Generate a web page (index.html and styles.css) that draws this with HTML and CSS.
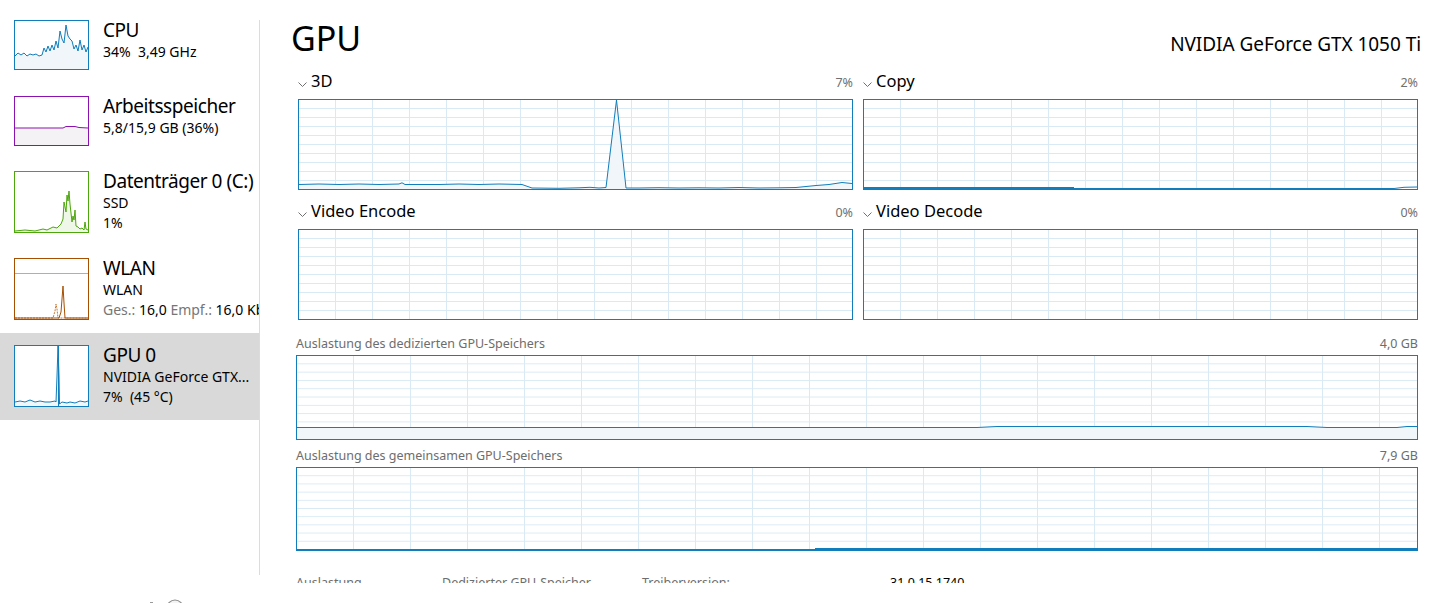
FILE: index.html
```html
<!DOCTYPE html>
<html lang="de">
<head>
<meta charset="utf-8">
<title>Task-Manager – GPU</title>
<link rel="stylesheet" href="styles.css">
</head>
<body>
<div class="app">
  <div class="body">
    <nav class="sidebar">
      <div class="item item-first">
        <div class="thumb thumb-cpu thumb-2">
          <svg viewBox="0 0 73 48" preserveAspectRatio="none">
            <polygon class="fill-cpu" points="0,35 3,32 6,34 9,32 12,35 15,33 18,34 21,33 24,35 27,34 29,27 31,31 33,25 35,30 37,24 39,29 41,20 43,27 45,10 47,18 49,22 51,4 53,15 55,18 57,20 59,28 61,24 63,30 65,19 67,29 69,24 71,31 73,26 73,48 0,48"/>
            <polyline class="line-cpu" points="0,35 3,32 6,34 9,32 12,35 15,33 18,34 21,33 24,35 27,34 29,27 31,31 33,25 35,30 37,24 39,29 41,20 43,27 45,10 47,18 49,22 51,4 53,15 55,18 57,20 59,28 61,24 63,30 65,19 67,29 69,24 71,31 73,26"/>
          </svg>
        </div>
        <div class="info">
          <div class="title">CPU</div>
          <div class="sub">34%&nbsp; 3,49 GHz</div>
        </div>
      </div>
      <div class="item">
        <div class="thumb thumb-mem thumb-2">
          <svg viewBox="0 0 73 48" preserveAspectRatio="none">
            <polygon class="fill-mem" points="0,31 48,31 51,29.5 60,29.5 64,30.5 73,31 73,48 0,48"/>
            <polyline class="line-mem" points="0,31 48,31 51,29.5 60,29.5 64,30.5 73,31"/>
          </svg>
        </div>
        <div class="info">
          <div class="title">Arbeitsspeicher</div>
          <div class="sub">5,8/15,9 GB (36%)</div>
        </div>
      </div>
      <div class="item">
        <div class="thumb thumb-disk thumb-3">
          <svg viewBox="0 0 73 60" preserveAspectRatio="none">
            <polygon class="fill-disk" points="0,59 10,58 20,59 28,57 32,58 38,55 42,56 46,52 48,47 49,30 51,40 52,23 53,29 54,19 55,32 57,50 58,44 59,48 60,38 61,54 63,55 65,57 67,56 69,58 70,50 71,57 73,58 73,60 0,60"/>
            <polyline class="line-disk" points="0,59 10,58 20,59 28,57 32,58 38,55 42,56 46,52 48,47 49,30 51,40 52,23 53,29 54,19 55,32 57,50 58,44 59,48 60,38 61,54 63,55 65,57 67,56 69,58 70,50 71,57 73,58"/>
          </svg>
        </div>
        <div class="info">
          <div class="title">Datenträger 0 (C:)</div>
          <div class="sub">SSD</div>
          <div class="sub">1%</div>
        </div>
      </div>
      <div class="item">
        <div class="thumb thumb-net thumb-3">
          <svg viewBox="0 0 73 60" preserveAspectRatio="none">
            <line class="scale-net" x1="0" y1="14.5" x2="73" y2="14.5"/>
            <polyline class="line-net-dash" points="0,59 38,59 40,52 41,45 42,50 43,59 73,59"/>
            <polyline class="line-net" points="0,59 44,59 46,53 47,40 48,27 49,44 50,59 73,59"/>
          </svg>
        </div>
        <div class="info">
          <div class="title">WLAN</div>
          <div class="sub">WLAN</div>
          <div class="sub"><span class="muted">Ges.:</span> 16,0 <span class="muted">Empf.:</span> 16,0 Kbit/s</div>
        </div>
      </div>
      <div class="item item-selected">
        <div class="thumb thumb-gpu thumb-3">
          <svg viewBox="0 0 73 60" preserveAspectRatio="none">
            <polygon class="fill-gpu" points="0,56 5,55 10,56 15,54 20,56 25,55 30,56 35,56 40,55 41,56 42,30 43,0 44,30 44.5,58 47,56 52,57 55,56 60,57 65,55 70,56 73,55 73,60 0,60"/>
            <polyline class="line-gpu" points="0,56 5,55 10,56 15,54 20,56 25,55 30,56 35,56 40,55 41,56 42,30 43,0 44,30 44.5,58 47,56 52,57 55,56 60,57 65,55 70,56 73,55"/>
            <line class="line-gpu" x1="43.5" y1="0" x2="43.5" y2="60"/>
          </svg>
        </div>
        <div class="info">
          <div class="title">GPU 0</div>
          <div class="sub">NVIDIA GeForce GTX...</div>
          <div class="sub">7%&nbsp; (45 °C)</div>
        </div>
      </div>
    </nav>
    <div class="divider"></div>
    <main class="main">
      <header class="head">
        <h1 class="head-title">GPU</h1>
        <div class="head-model">NVIDIA GeForce GTX 1050 Ti</div>
      </header>

      <section class="engines">
        <div class="engine">
          <div class="engine-head">
            <svg class="chev" viewBox="0 0 9 5"><polyline points="0.5,0.5 4.5,4.5 8.5,0.5"/></svg>
            <span class="engine-name">3D</span>
            <span class="pct">7%</span>
          </div>
          <div class="graph grid-s">
            <svg viewBox="0 0 553 89" preserveAspectRatio="none">
              <polygon class="g-fill" points="0,84.5 20,84 40,84.5 60,84 80,84.5 100,84 103,82.8 106,84.5 140,84.5 160,84 180,84.5 200,84 223,84.5 233,88 260,88.3 280,87.8 291,87.3 300,88 307,87.5 317.5,0 327,88 340,88 360,87.7 380,88 400,87.8 420,88 440,87.5 460,88 480,87.8 497,87.5 517,85.5 530,84.5 543,82.5 553,83.5 553,89 0,89"/>
              <polyline class="g-line" points="0,84.5 20,84 40,84.5 60,84 80,84.5 100,84 103,82.8 106,84.5 140,84.5 160,84 180,84.5 200,84 223,84.5 233,88 260,88.3 280,87.8 291,87.3 300,88 307,87.5 317.5,0 327,88 340,88 360,87.7 380,88 400,87.8 420,88 440,87.5 460,88 480,87.8 497,87.5 517,85.5 530,84.5 543,82.5 553,83.5"/>
            </svg>
          </div>
        </div>
        <div class="engine">
          <div class="engine-head">
            <svg class="chev" viewBox="0 0 9 5"><polyline points="0.5,0.5 4.5,4.5 8.5,0.5"/></svg>
            <span class="engine-name">Copy</span>
            <span class="pct">2%</span>
          </div>
          <div class="graph grid-s">
            <svg viewBox="0 0 553 89" preserveAspectRatio="none">
              <polyline class="g-line g-thick" points="0,88 210,88"/>
              <polyline class="g-line" points="210,88.5 530,88.5 540,87.3 553,87"/>
            </svg>
          </div>
        </div>
        <div class="engine">
          <div class="engine-head">
            <svg class="chev" viewBox="0 0 9 5"><polyline points="0.5,0.5 4.5,4.5 8.5,0.5"/></svg>
            <span class="engine-name">Video Encode</span>
            <span class="pct">0%</span>
          </div>
          <div class="graph grid-s"></div>
        </div>
        <div class="engine">
          <div class="engine-head">
            <svg class="chev" viewBox="0 0 9 5"><polyline points="0.5,0.5 4.5,4.5 8.5,0.5"/></svg>
            <span class="engine-name">Video Decode</span>
            <span class="pct">0%</span>
          </div>
          <div class="graph grid-s"></div>
        </div>
      </section>

      <section class="mem mem-dedicated">
        <div class="mem-head">
          <span>Auslastung des dedizierten GPU-Speichers</span>
          <span>4,0 GB</span>
        </div>
        <div class="graph grid-w graph-ded">
          <svg viewBox="0 0 1120 83" preserveAspectRatio="none">
            <polygon class="g-fill" points="0,71.5 680,71.5 700,70.5 1010,70.5 1030,71.5 1100,71.5 1110,70.5 1120,70.5 1120,83 0,83"/>
            <polyline class="g-line" points="0,71.5 680,71.5 700,70.5 1010,70.5 1030,71.5 1100,71.5 1110,70.5 1120,70.5"/>
          </svg>
        </div>
      </section>

      <section class="mem mem-shared">
        <div class="mem-head">
          <span>Auslastung des gemeinsamen GPU-Speichers</span>
          <span>7,9 GB</span>
        </div>
        <div class="graph grid-w graph-sh">
          <svg viewBox="0 0 1120 82" preserveAspectRatio="none">
            <polyline class="g-line" points="0,81.5 518,81.5"/>
            <polyline class="g-line g-thick" points="518,81 1120,81"/>
          </svg>
        </div>
      </section>

      <div class="stats">
        <span class="stat-label">Auslastung</span>
        <span class="stat-label">Dedizierter GPU-Speicher</span>
        <span class="stat-label">Treiberversion:</span>
        <span class="stat-value">31.0.15.1740</span>
      </div>
    </main>
  </div>
  <footer class="footer">
    <span class="footer-mark"></span>
    <svg class="footer-icon" viewBox="0 0 18 18"><circle cx="9" cy="9" r="8"/></svg>
  </footer>
</div>
</body>
</html>
```

FILE: styles.css
```css
html, body {
  margin: 0;
  padding: 0;
  background: #ffffff;
  overflow: hidden;
}

body {
  font-family: "Segoe UI", "Noto Sans", "Open Sans", sans-serif;
  color: #000;
}

.app {
  width: 1447px;
  height: 603px;
  display: flex;
  flex-direction: column;
}

.body {
  display: flex;
  height: 583px;
  flex: none;
}

/* ---------- sidebar ---------- */
.sidebar {
  width: 259px;
  flex: none;
  padding-top: 8px;
  overflow: hidden;
}

.item {
  display: flex;
  align-items: flex-start;
  gap: 14px;
  padding: 12px 0 13px 14px;
  white-space: nowrap;
}

.item-first {
  padding-bottom: 14px;
}

.item-selected {
  background: #d9d9d9;
}

.thumb {
  width: 75px;
  flex: none;
  box-sizing: border-box;
  border: 1px solid;
  background: #fff;
}

.thumb svg {
  display: block;
  width: 100%;
  height: 100%;
}

.thumb-2 { height: 50px; }
.thumb-3 { height: 62px; }

.thumb-cpu { border-color: #117dbb; }
.thumb-mem { border-color: #8b12ae; }
.thumb-disk { border-color: #4da60c; }
.thumb-net { border-color: #a74f01; }
.thumb-gpu { border-color: #117dbb; }

.line-cpu, .line-gpu { fill: none; stroke: #117dbb; stroke-width: 1; vector-effect: non-scaling-stroke; }
.fill-cpu, .fill-gpu { fill: #f1f6fa; stroke: none; }
.line-mem { fill: none; stroke: #8b12ae; stroke-width: 1; vector-effect: non-scaling-stroke; }
.fill-mem { fill: #f4f2f4; stroke: none; }
.line-disk { fill: none; stroke: #4da60c; stroke-width: 1; vector-effect: non-scaling-stroke; }
.fill-disk { fill: #eff7e9; stroke: none; }
.scale-net { stroke: #d9a47a; stroke-width: 1; vector-effect: non-scaling-stroke; }
.line-net { fill: none; stroke: #a74f01; stroke-width: 1; vector-effect: non-scaling-stroke; }
.line-net-dash { fill: none; stroke: #c87a3a; stroke-width: 1; stroke-dasharray: 2 1; vector-effect: non-scaling-stroke; }

.info {
  margin-top: -2px;
}

.title {
  font-size: 19px;
  line-height: 24px;
  letter-spacing: -0.45px;
}

.sub {
  font-size: 14px;
  line-height: 20px;
}

.muted {
  color: #767676;
}

.divider {
  width: 1px;
  flex: none;
  background: #dcdcdc;
  margin: 20px 0 8px;
}

/* ---------- main ---------- */
.main {
  flex: 1;
  min-width: 0;
  box-sizing: border-box;
  padding: 0 29px 0 36px;
  overflow: hidden;
}

.head {
  display: flex;
  justify-content: space-between;
  align-items: baseline;
  height: 70px;
  box-sizing: border-box;
  padding-top: 16px;
}

.head-title {
  margin: 0 0 0 -5px;
  font-size: 34px;
  font-weight: 400;
  line-height: 44px;
}

.head-model {
  font-size: 19px;
  line-height: 26px;
  margin-right: -3px;
  letter-spacing: -0.05px;
}

.engines {
  display: grid;
  grid-template-columns: 1fr 1fr;
  column-gap: 10px;
  row-gap: 10px;
  margin-left: 2px;
}

.engine-head {
  display: flex;
  align-items: baseline;
  height: 29px;
  box-sizing: border-box;
  padding-top: 1px;
}

.chev {
  width: 9px;
  height: 5px;
  flex: none;
  margin-right: 4px;
  align-self: center;
  margin-top: -1px;
}

.chev polyline {
  fill: none;
  stroke: #707070;
  stroke-width: 1;
}

.engine-name {
  font-size: 16.5px;
  line-height: 20px;
}

.pct {
  margin-left: auto;
  font-size: 12.5px;
  line-height: 18px;
  color: #707070;
}

.graph {
  box-sizing: border-box;
  border: 1px solid #117dbb;
  background-color: #fff;
}

.graph svg {
  display: block;
  width: 100%;
  height: 100%;
  overflow: hidden;
}

.grid-s {
  height: 91px;
  background-image:
    linear-gradient(to right, transparent 36px, #d9eaf4 36px),
    linear-gradient(to bottom, transparent 8px, #d9eaf4 8px);
  background-size: 37px 100%, 100% 9px;
}

.grid-w {
  background-image:
    linear-gradient(to right, transparent 56px, #d9eaf4 56px),
    linear-gradient(to bottom, transparent calc(100% - 1px), #d9eaf4 calc(100% - 1px));
  background-size: 57px 100%, 100% 10%;
}

.graph-ded { height: 85px; }
.graph-sh { height: 84px; }

.g-line {
  fill: none;
  stroke: #117dbb;
  stroke-width: 1;
  vector-effect: non-scaling-stroke;
}

.g-thick {
  stroke-width: 2;
}

.g-fill {
  fill: #f1f6fa;
  stroke: none;
}

.mem-head {
  display: flex;
  justify-content: space-between;
  height: 20px;
  font-size: 12.5px;
  line-height: 18px;
  color: #6d6d6d;
}

.mem-dedicated { margin-top: 15px; }
.mem-shared { margin-top: 7px; }

.stats {
  display: grid;
  grid-template-columns: 146px 200px 248px auto;
  margin-top: 23px;
  font-size: 12.5px;
  line-height: 18px;
  white-space: nowrap;
}

.stat-label { color: #6d6d6d; }
.stat-value { color: #000; }

/* ---------- footer ---------- */
.footer {
  height: 20px;
  flex: none;
  display: flex;
  align-items: flex-start;
  padding: 16px 0 0 150px;
  box-sizing: border-box;
  gap: 13px;
}

.footer-mark {
  width: 3px;
  height: 2px;
  margin-top: 3px;
  background: #9a9a9a;
}

.footer-icon {
  width: 18px;
  height: 18px;
  flex: none;
}

.footer-icon circle {
  fill: #f4f4f4;
  stroke: #8a8a8a;
  stroke-width: 1.2;
}
```
